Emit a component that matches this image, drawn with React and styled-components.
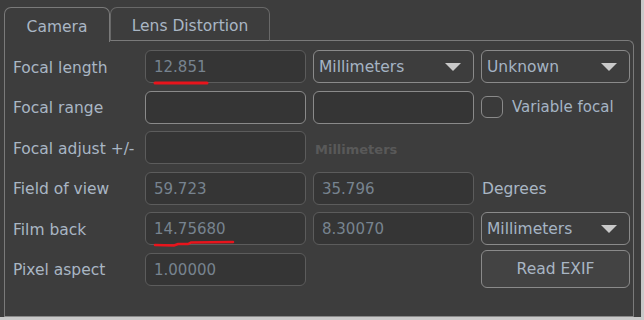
import styled, { createGlobalStyle } from "styled-components";

const GlobalStyle = createGlobalStyle`
    html, body {
        margin: 0;
        padding: 0;
        background-color: #c9c9c9;
    }
    body {
        font-family: "DejaVu Sans", "Open Sans", sans-serif;
    }
`;

const Window = styled.div`
    width: 641px;
    height: 317px;
    background-color: #3d3d3d;
    box-sizing: border-box;
    padding: 7px 7px 0 4px;
    display: flex;
    flex-direction: column;
`;

const TabBar = styled.div`
    display: flex;
    height: 34px;
`;

const Tab = styled.div`
    box-sizing: border-box;
    width: ${(p) => p.w}px;
    height: ${(p) => (p.active ? 35 : 34)}px;
    border: 1px solid ${(p) => (p.active ? "#7a7a7a" : "#686868")};
    border-bottom: ${(p) => (p.active ? "none" : "1px solid #7a7a7a")};
    border-radius: 7px 7px 0 0;
    background-color: #3d3d3d;
    color: #a9b6c4;
    font-size: 15.5px;
    display: flex;
    align-items: center;
    justify-content: center;
    padding-top: ${(p) => (p.active ? 3 : 4)}px;
    position: relative;
    z-index: ${(p) => (p.active ? 2 : 1)};
`;

const Panel = styled.div`
    flex: 1;
    box-sizing: border-box;
    border: 1px solid #7a7a7a;
    border-bottom: 1px solid #8a8a8a;
    border-radius: 0 6px 0 0;
    margin-top: -1px;
    padding: 9px 4px 0 8px;
    display: grid;
    grid-template-columns: 125px 161px 161px 149px;
    grid-template-rows: repeat(6, 33px);
    column-gap: 7px;
    row-gap: 7.5px;
    align-items: center;
`;

const Label = styled.div`
    color: #a9b6c4;
    font-size: 15.5px;
    white-space: nowrap;
    padding-top: 2px;
`;

const Field = styled.div`
    position: relative;
    box-sizing: border-box;
    height: 33px;
    border: 1.5px solid ${(p) => (p.editable ? "#8a8a8a" : "#5c5c5c")};
    border-radius: 6px;
    background-color: #353535;
    color: #77838f;
    font-size: 15px;
    padding: 1px 0 0 8px;
    display: flex;
    align-items: center;
`;

const Combo = styled.div`
    box-sizing: border-box;
    height: 33px;
    border: 1.5px solid #8a8a8a;
    border-radius: 6px;
    background-color: #3d3d3d;
    color: #a5b4c4;
    font-size: 15.5px;
    padding: 1px 12px 0 5px;
    display: flex;
    align-items: center;
    justify-content: space-between;
`;

const Arrow = styled.span`
    width: 0;
    height: 0;
    border-left: 8px solid transparent;
    border-right: 8px solid transparent;
    border-top: 8px solid #c9c9c9;
`;

const Check = styled.label`
    display: flex;
    align-items: center;
    gap: 9px;
    color: #a5b4c4;
    font-size: 15px;
    white-space: nowrap;
`;

const Box = styled.span`
    box-sizing: border-box;
    flex: none;
    width: 22px;
    height: 22px;
    border: 1.5px solid #8a8a8a;
    border-radius: 6px;
    background-color: #3a3a3a;
`;

const Disabled = styled.div`
    color: #595959;
    font-size: 13px;
    font-weight: bold;
    padding: 3px 0 0 2px;
`;

const Unit = styled.div`
    color: #a9b6c4;
    font-size: 15.5px;
    padding: 2px 0 0 1px;
`;

const Button = styled.div`
    box-sizing: border-box;
    height: 38px;
    border: 1.5px solid #8a8a8a;
    border-radius: 6px;
    background-color: #434343;
    color: #a9b6c4;
    font-size: 15.5px;
    display: flex;
    align-items: center;
    justify-content: center;
`;

const Mark = styled.svg`
    position: absolute;
    left: 8px;
    bottom: -3px;
    overflow: visible;
`;

const App = () => {
    return (
        <>
            <GlobalStyle />
            <Window>
                <TabBar>
                    <Tab w={106} active>Camera</Tab>
                    <Tab w={160}>Lens Distortion</Tab>
                </TabBar>
                <Panel>
                    <Label>Focal length</Label>
                    <Field>
                        12.851
                        <Mark width="54" height="4">
                            <path d="M1 2 L53 2" stroke="#e8141c" strokeWidth="3" strokeLinecap="round" />
                        </Mark>
                    </Field>
                    <Combo>Millimeters<Arrow /></Combo>
                    <Combo>Unknown<Arrow /></Combo>

                    <Label>Focal range</Label>
                    <Field editable />
                    <Field editable />
                    <Check><Box />Variable focal</Check>

                    <Label>Focal adjust +/-</Label>
                    <Field />
                    <Disabled>Millimeters</Disabled>
                    <div />

                    <Label>Field of view</Label>
                    <Field>59.723</Field>
                    <Field>35.796</Field>
                    <Unit>Degrees</Unit>

                    <Label>Film back</Label>
                    <Field>
                        14.75680
                        <Mark width="80" height="6">
                            <path d="M1 4 L20 4.5 L24 3 L34 3 L37 1.5 L79 1" stroke="#e8141c" strokeWidth="2.5" fill="none" strokeLinecap="round" />
                        </Mark>
                    </Field>
                    <Field>8.30070</Field>
                    <Combo>Millimeters<Arrow /></Combo>

                    <Label>Pixel aspect</Label>
                    <Field>1.00000</Field>
                    <div />
                    <Button>Read EXIF</Button>
                </Panel>
            </Window>
        </>
    );
};

export default App;
